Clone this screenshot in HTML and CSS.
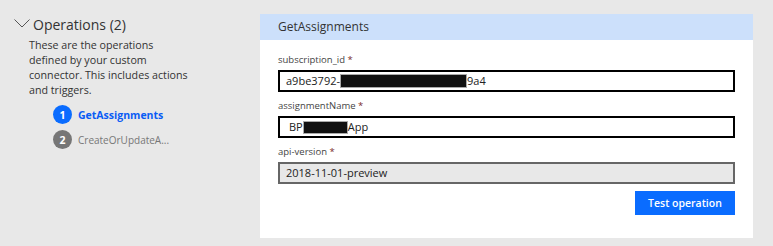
FILE: index.html
```html
<!DOCTYPE html>
<html lang="en">
<head>
    <meta charset="UTF-8">
    <meta name="viewport" content="width=device-width, initial-scale=1.0">
    <title>Operations</title>
    <link rel="stylesheet" href="styles.css">
</head>
<body>
    <div class="page">
        <div class="sidebar">
            <div class="section-title">
                <svg class="chevron" width="16" height="9" viewBox="0 0 16 9">
                    <path d="M0.5 0.5 L8 8 L15.5 0.5" fill="none" stroke="#555" stroke-width="1"/>
                </svg>
                <span>Operations (2)</span>
            </div>
            <p class="desc">These are the operations<br>defined by your custom<br>connector. This includes actions<br>and triggers.</p>
            <ul class="steps">
                <li class="step active"><span class="num">1</span><span class="name">GetAssignments</span></li>
                <li class="step"><span class="num">2</span><span class="name">CreateOrUpdateA...</span></li>
            </ul>
        </div>

        <div class="card">
            <div class="card-header">GetAssignments</div>
            <div class="card-body">
                <div class="label">subscription_id <span class="req">*</span></div>
                <div class="field">a9be3792-<span class="redact r1"></span>9a4</div>

                <div class="label">assignmentName <span class="req">*</span></div>
                <div class="field f2">BP<span class="redact r2"></span>App</div>

                <div class="label">api-version <span class="req">*</span></div>
                <div class="field readonly">2018-11-01-preview</div>

                <div class="actions">
                    <button type="button" class="btn">Test operation</button>
                </div>
            </div>
        </div>
    </div>
</body>
</html>
```

FILE: styles.css
```css
*{
    margin: 0;
    padding: 0;
    box-sizing: border-box;
}
body{
    background-color: #e8e8e8;
    font-family: "Open Sans", "Noto Sans", sans-serif;
    color: #333;
}
.page{
    display: flex;
    height: 246px;
}
.sidebar{
    width: 260px;
    padding: 12px 0 0 14px;
}
.section-title{
    display: flex;
    align-items: center;
    gap: 3px;
    font-size: 14px;
    color: #333;
    height: 24px;
}
.chevron{
    margin-top: -2px;
}
.desc{
    font-size: 10.7px;
    line-height: 15px;
    color: #333;
    padding: 2px 0 0 15px;
}
.steps{
    list-style: none;
    padding: 4px 0 0 39px;
}
.step{
    display: flex;
    align-items: center;
    gap: 6px;
    height: 25px;
    font-size: 10px;
    color: #777;
}
.step .num{
    width: 19px;
    height: 19px;
    border-radius: 50%;
    background-color: #767676;
    color: #fff;
    font-weight: 700;
    font-size: 10.5px;
    display: flex;
    align-items: center;
    justify-content: center;
}
.step.active .num{
    background-color: #0a6cff;
}
.step.active .name{
    color: #0a5cf5;
    font-weight: 700;
    font-size: 10.5px;
}
.card{
    margin-top: 14px;
    width: 493px;
    height: 224px;
    background-color: #fff;
}
.card-header{
    height: 26px;
    background-color: #cce0fb;
    font-size: 12px;
    line-height: 26px;
    padding-left: 18px;
    color: #333;
}
.card-body{
    padding: 6px 18px 0 18px;
}
.label{
    font-size: 9.5px;
    line-height: 16px;
    padding: 6px 0 2px 0;
    color: #444;
}
.req{
    color: #7a2a2a;
}
.field{
    height: 22px;
    border: 2px solid #000;
    font-size: 11px;
    line-height: 18px;
    padding-left: 6px;
    color: #222;
    display: flex;
    align-items: center;
}
.field.f2{
    padding-left: 9px;
}
.field.readonly{
    background-color: #e8e8e8;
    border-color: #666;
}
.redact{
    display: inline-block;
    background-color: #111;
    border: 1px solid #aaa;
}
.r1{
    width: 127px;
    height: 14px;
}
.r2{
    width: 45px;
    height: 13px;
}
.actions{
    display: flex;
    justify-content: flex-end;
    padding-top: 7px;
}
.btn{
    width: 100px;
    height: 24px;
    border: none;
    background-color: #0a6cff;
    color: #fff;
    font-family: "Open Sans", "Noto Sans", sans-serif;
    font-size: 10.5px;
    font-weight: 600;
}
```
